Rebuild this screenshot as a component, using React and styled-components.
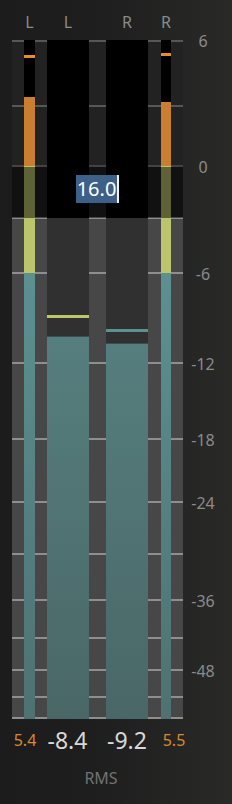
import React from 'react';
import styled, { createGlobalStyle } from 'styled-components';

const GlobalStyle = createGlobalStyle`
  html, body {
    margin: 0;
    padding: 0;
    background: #1d1d1d;
  }
  body {
    font-family: "Noto Sans", "DejaVu Sans", sans-serif;
  }
`;

// meter geometry, pixels from the top of the meter
const METER_H = 679;
const ZERO = 126;
const MINUS3 = 178;
const MINUS6 = 233;
const COLS = '12px 11px 12px 42px 17px 42px 13px 10px 12px';

const TICKS = [
  { y: 0, label: '6' },
  { y: 66 },
  { y: ZERO, label: '0' },
  { y: MINUS3 },
  { y: MINUS6, label: '-6' },
  { y: 323, label: '-12' },
  { y: 399, label: '-18' },
  { y: 462, label: '-24' },
  { y: 514 },
  { y: 560, label: '-36' },
  { y: 598 },
  { y: 630, label: '-48' },
  { y: 657 },
  { y: 678 },
];

const Panel = styled.div`
  width: 232px;
  height: 804px;
  box-sizing: border-box;
  padding-left: 12px;
  background: linear-gradient(to right, #1c1c1c 0, #1e1e1e 90px, #292928 100%);
  overflow: hidden;
`;

const Header = styled.div`
  display: grid;
  grid-template-columns: ${COLS};
  height: 40px;
  align-items: center;
`;

const ChannelLabel = styled.div`
  grid-column: ${(p) => p.$col};
  justify-self: center;
  padding-top: 3px;
  color: #8b8b8b;
  font-size: 16px;
  line-height: 20px;
`;

const Body = styled.div`
  display: flex;
`;

const Meter = styled.div`
  position: relative;
  display: grid;
  grid-template-columns: ${COLS};
  height: ${METER_H}px;
`;

const Strip = styled.div`
  position: relative;
  background: linear-gradient(to bottom, #222222 0 ${MINUS3}px, #474747 ${MINUS3}px 100%);
`;

const Tick = styled.div`
  position: absolute;
  left: 0;
  right: 0;
  height: 2px;
  background: ${(p) => p.$color};
`;

const PeakBar = styled.div`
  position: relative;
  background: #000;
`;

const RmsBar = styled.div`
  position: relative;
  background: linear-gradient(to bottom, #000 0 ${MINUS3}px, #303030 ${MINUS3}px 100%);
`;

const Fill = styled.div`
  position: absolute;
  left: 0;
  right: 0;
  bottom: 0;
  background-size: 100% ${METER_H}px;
  background-position: bottom;
  background-repeat: no-repeat;
  background-image: ${(p) =>
    p.$kind === 'peak'
      ? `linear-gradient(to bottom, #c97f2f 0 ${ZERO}px, #bdc56c ${ZERO}px ${MINUS6}px, #5c9191 ${MINUS6}px, #4f7171 100%)`
      : 'linear-gradient(to bottom, #609090 0, #4a6767 100%)'};
  border-top: ${(p) => (p.$kind === 'rms' ? '1px solid #3b4d4d' : 'none')};
`;

const Hold = styled.div`
  position: absolute;
  left: 0;
  right: 0;
  height: 3px;
  background: ${(p) => p.$color};
`;

const Overlay = styled.div`
  position: absolute;
  left: 0;
  right: 0;
  top: ${ZERO + 1}px;
  height: ${MINUS3 - ZERO - 1}px;
  background: rgba(0, 0, 0, 0.5);
  display: flex;
  justify-content: center;
  align-items: flex-start;
  padding-top: 8px;
  box-sizing: border-box;
`;

const EditBox = styled.span`
  display: inline-block;
  height: 28px;
  line-height: 28px;
  padding: 0 1px;
  background: #3d6089;
  color: #fff;
  font-size: 20px;
  border-right: 2px solid #f2f2f2;
`;

const Scale = styled.div`
  position: relative;
  width: 40px;
  height: ${METER_H}px;
`;

const ScaleLabel = styled.div`
  position: absolute;
  left: 0;
  right: 0;
  height: 20px;
  line-height: 20px;
  text-align: center;
  color: #8b8b8b;
  font-size: 16px;
`;

const Values = styled.div`
  display: grid;
  grid-template-columns: 26px 59px 60px 34px;
  height: 42px;
  align-items: center;
`;

const Value = styled.div`
  text-align: center;
  color: ${(p) => (p.$peak ? '#d88b30' : '#d8d8d8')};
  font-size: ${(p) => (p.$peak ? '16px' : '23px')};
`;

const Caption = styled.div`
  width: 178px;
  height: 34px;
  line-height: 34px;
  text-align: center;
  color: #727272;
  font-size: 16px;
`;

const tickColor = (y) => {
  if (y === ZERO) return '#434343';
  if (y < MINUS3) return '#575757';
  return '#8e8e8e';
};

const StripCol = () => (
  <Strip>
    {TICKS.map((t) => (
      <Tick key={t.y} $color={tickColor(t.y)} style={{ top: Math.max(0, t.y - 1) }} />
    ))}
  </Strip>
);

const channels = {
  peakL: { hold: 15, fill: 57, holdColor: '#e38c30' },
  rmsL: { hold: 275, fill: 296, holdColor: '#bdc56c' },
  rmsR: { hold: 289, fill: 303, holdColor: '#5c9191' },
  peakR: { hold: 13, fill: 62, holdColor: '#e38c30' },
};

const Bar = ({ kind, data }) => {
  const Wrap = kind === 'peak' ? PeakBar : RmsBar;
  return (
    <Wrap>
      <Hold $color={data.holdColor} style={{ top: data.hold }} />
      <Fill $kind={kind} style={{ top: data.fill }} />
    </Wrap>
  );
};

const App = () => {
  return (
    <Panel>
      <GlobalStyle />
      <Header>
        <ChannelLabel $col={2}>L</ChannelLabel>
        <ChannelLabel $col={4}>L</ChannelLabel>
        <ChannelLabel $col={6}>R</ChannelLabel>
        <ChannelLabel $col={8}>R</ChannelLabel>
      </Header>
      <Body>
        <Meter>
          <StripCol />
          <Bar kind="peak" data={channels.peakL} />
          <StripCol />
          <Bar kind="rms" data={channels.rmsL} />
          <StripCol />
          <Bar kind="rms" data={channels.rmsR} />
          <StripCol />
          <Bar kind="peak" data={channels.peakR} />
          <StripCol />
          <Overlay>
            <EditBox>16.0</EditBox>
          </Overlay>
        </Meter>
        <Scale>
          {TICKS.filter((t) => t.label).map((t) => (
            <ScaleLabel key={t.y} style={{ top: t.y - 9 }}>
              {t.label}
            </ScaleLabel>
          ))}
        </Scale>
      </Body>
      <Values>
        <Value $peak>5.4</Value>
        <Value>-8.4</Value>
        <Value>-9.2</Value>
        <Value $peak>5.5</Value>
      </Values>
      <Caption>RMS</Caption>
    </Panel>
  );
};

export default App;
